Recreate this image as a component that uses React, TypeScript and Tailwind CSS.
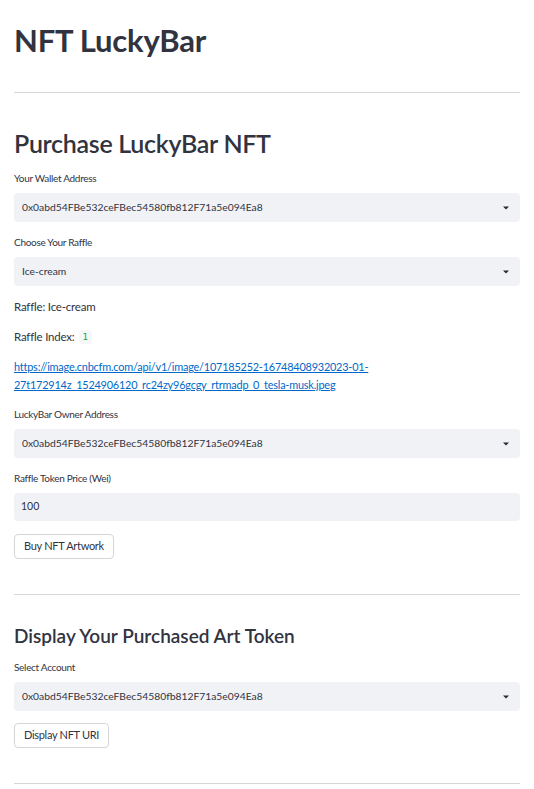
import { ReactNode } from 'react';

const address = '0x0abd54FBe532ceFBec54580fb812F71a5e094Ea8';

function Label({ children, className = '' }: { children: ReactNode; className?: string }) {
  return <div className={`text-[10px] leading-[14px] tracking-[-0.3px] text-[#31333f] ${className}`}>{children}</div>;
}

function Select({ value, className = '' }: { value: string; className?: string }) {
  return (
    <div className={`flex h-[29px] items-center justify-between rounded-[4px] bg-[#f0f2f6] pl-[8px] pr-[8px] ${className}`}>
      <span className="text-[10.3px] text-[#31333f]">{value}</span>
      <svg width="10" height="10" viewBox="0 0 10 10" className="mr-[1px]">
        <path d="M2 3.5 L8 3.5 L5 6.5 Z" fill="#262730" />
      </svg>
    </div>
  );
}

function Button({ children, className = '' }: { children: ReactNode; className?: string }) {
  return (
    <button className={`h-[25px] rounded-[4px] border border-[#d6d6d9] bg-white px-[9px] text-[11px] tracking-[-0.3px] text-[#31333f] ${className}`}>
      {children}
    </button>
  );
}

function Rule({ className = '' }: { className?: string }) {
  return <hr className={`border-0 border-t border-[#d6d6d9] ${className}`} />;
}

export default function App() {
  return (
    <div className="min-h-screen bg-white px-[14px] pt-[20px] text-[#31333f]" style={{ fontFamily: 'Lato, "Open Sans", sans-serif' }}>
      <h1 className="text-[31px] font-bold leading-[40px] tracking-[-0.2px]">NFT LuckyBar</h1>
      <Rule className="mt-[32px]" />

      {/* Purchase section */}
      <h2 className="mt-[33px] text-[25px] font-semibold leading-[34px] tracking-[-0.3px]">Purchase LuckyBar NFT</h2>
      <Label className="mt-[11px]">Your Wallet Address</Label>
      <Select value={address} className="mt-[8px]" />
      <Label className="mt-[13px]">Choose Your Raffle</Label>
      <Select value="Ice-cream" className="mt-[8px]" />
      <p className="mt-[12px] text-[11.5px] leading-[18px] tracking-[-0.2px]">Raffle: Ice-cream</p>
      <p className="mt-[12px] flex items-center text-[11.5px] leading-[18px] tracking-[-0.2px]">
        Raffle Index:
        <code className="ml-[4px] rounded-[3px] bg-[#f6f7f9] px-[4px] text-[9px] leading-[14px] text-[#09ab3b]" style={{ fontFamily: '"DejaVu Sans Mono", monospace' }}>
          1
        </code>
      </p>
      <a href="#" className="mt-[12px] block text-[10.9px] leading-[18px] tracking-[-0.2px] text-[#0068c9] underline">
        https://image.cnbcfm.com/api/v1/image/107185252-16748408932023-01-
        <br />
        27t172914z_1524906120_rc24zy96gcgy_rtrmadp_0_tesla-musk.jpeg
      </a>
      <Label className="mt-[13px]">LuckyBar Owner Address</Label>
      <Select value={address} className="mt-[8px]" />
      <Label className="mt-[13px]">Raffle Token Price (Wei)</Label>
      <div className="mt-[8px] flex h-[28px] items-center rounded-[4px] bg-[#f0f2f6] px-[7px] text-[10.5px]">100</div>
      <Button className="mt-[13px]">Buy NFT Artwork</Button>
      <Rule className="mt-[35px]" />

      {/* Display section */}
      <h3 className="mt-[27px] text-[19px] font-semibold leading-[28px]">Display Your Purchased Art Token</h3>
      <Label className="mt-[10px]">Select Account</Label>
      <Select value={address} className="mt-[8px]" />
      <Button className="mt-[12px]">Display NFT URI</Button>
      <Rule className="mt-[35px]" />
    </div>
  );
}
